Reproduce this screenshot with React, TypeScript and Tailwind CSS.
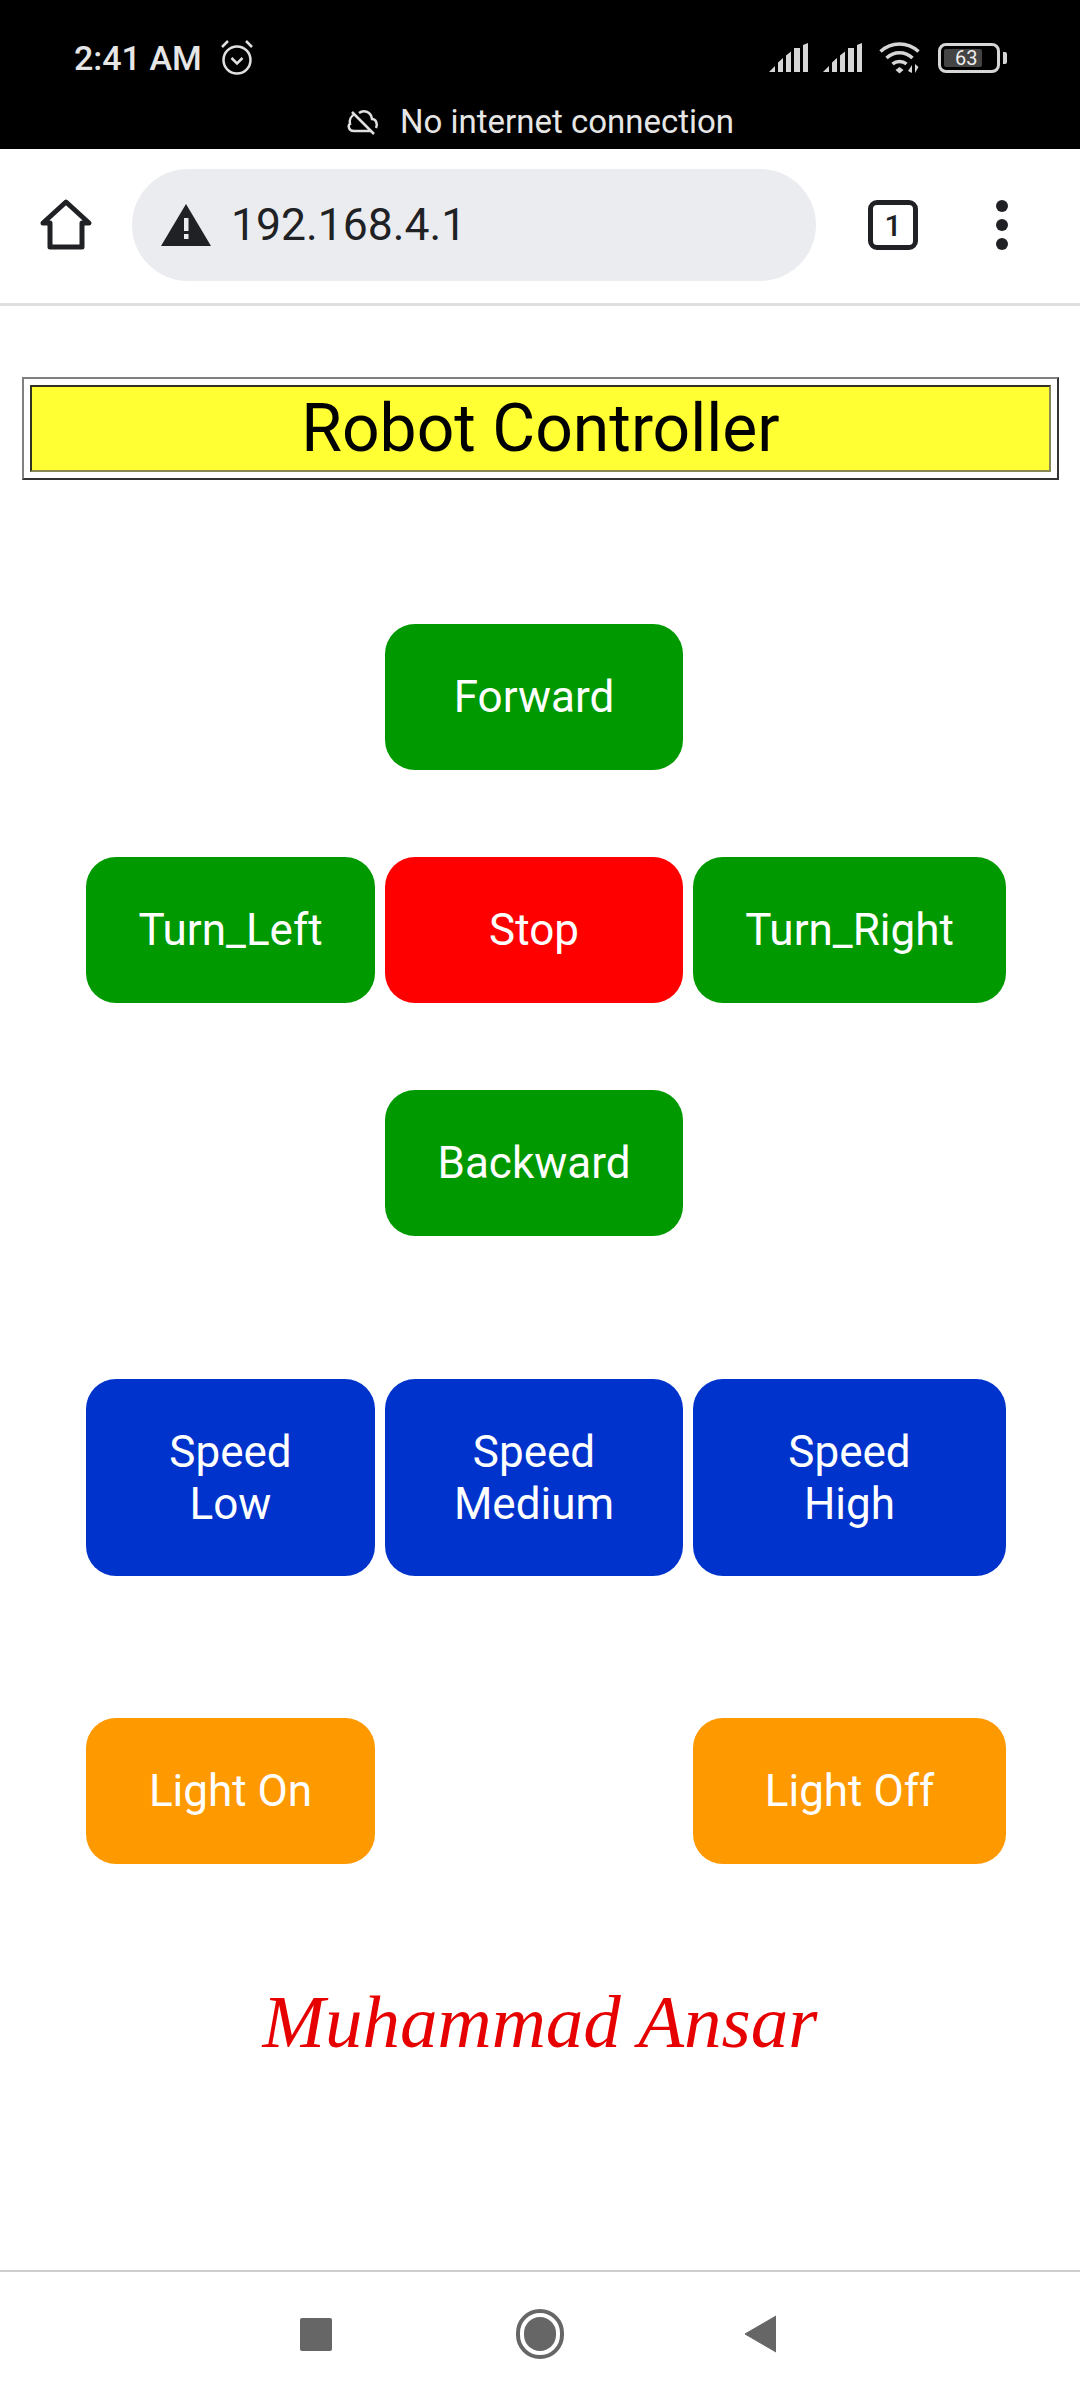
const roboto = "font-[Roboto,'Liberation_Sans',sans-serif]";

function Btn({ label, color }: { label: React.ReactNode; color: string }) {
  return (
    <div className={`flex items-center justify-center rounded-[30px] text-center text-[44px] leading-[52px] text-white ${color}`}>
      {label}
    </div>
  );
}

function Bars() {
  return (
    <svg width="42" height="30" viewBox="0 0 42 30" fill="#d6d6d6">
      <path d="M1 29l6-6v6z" />
      <path d="M10 19.500l5-4.500v14h-5z" />
      <path d="M18 12.500l5-4v20.500h-5z" />
      <rect x="26" y="5" width="6" height="24" />
      <path d="M35 2l5-2v29h-5z" />
    </svg>
  );
}

export default function App() {
  return (
    <div className={`flex h-[2400px] w-[1080px] flex-col bg-white ${roboto}`}>
      {/* Status bar */}
      <div className="flex h-[149px] flex-col bg-black text-[#e6e6e6]">
        <div className="flex h-[94px] items-center justify-between pl-[74px] pr-[73px] pt-[22px]">
          <div className="flex items-center gap-[17px]">
            <span className="text-[34px] font-medium">2:41 AM</span>
            <svg width="36" height="38" viewBox="0 0 36 38" fill="none" stroke="#e0e0e0" strokeWidth="2.500">
              <circle cx="18" cy="21" r="13.500" />
              <path d="M12.500 19l5.500 5.500 5.500-5.500" />
              <path d="M3 8l6-6M33 8l-6-6" />
            </svg>
          </div>
          <div className="flex items-center">
            <Bars />
            <div className="ml-[12px]">
              <Bars />
            </div>
            <svg className="ml-[15px]" width="44" height="32" viewBox="0 0 44 32" fill="none" stroke="#d6d6d6" strokeWidth="3.500">
              <path d="M1.500 9.500c11-10 27-10 38 0" />
              <path d="M7.500 16c7.500-7 18.500-7 26 0" />
              <path d="M13.500 22c4-3.500 10-3.500 14 0" />
              <path d="M20.500 25l4 3-4 3.500-4-3.500z" fill="#d6d6d6" stroke="none" />
              <path d="M33 31v-8l-4 6zM36 22v9l3.500-6z" fill="#d6d6d6" stroke="none" />
            </svg>
            <div className="ml-[15px] flex items-center gap-[3px]">
              <div className="flex h-[30px] w-[62px] items-center rounded-[8px] border-[3px] border-[#d6d6d6] p-[3px]">
                <div className="flex h-full w-[38px] items-center rounded-[2px] bg-[#444444]">
                  <span className="pl-[11px] text-[20px] leading-none text-[#eeeeee]">63</span>
                </div>
              </div>
              <div className="h-[12px] w-[4px] rounded-r-[2px] bg-[#d6d6d6]" />
            </div>
          </div>
        </div>
        <div className="mt-[8px] flex items-center justify-center gap-[20px]">
          <svg width="34" height="30" viewBox="0 0 34 30" fill="none" stroke="#e0e0e0" strokeWidth="2.500">
            <path d="M6 5l22 22" />
            <path d="M9 7c-4 2-6 6-5 10-2 1-2 7 4 7h17M13 6c5-4 12-1 13 6 4 0 6 5 4 9" />
          </svg>
          <span className="text-[33px] leading-[40px]">No internet connection</span>
        </div>
      </div>

      {/* Browser toolbar */}
      <div className="flex h-[157px] items-center border-b-[3px] border-[#dfdfdf] pb-[2px]">
        <div className="flex w-[132px] justify-center">
          <svg width="54" height="54" viewBox="0 0 54 54" fill="none" stroke="#202124" strokeWidth="5" strokeLinejoin="round">
            <path d="M4 25L27 4l23 21h-7v24H11V25z" />
          </svg>
        </div>
        <div className="flex h-[112px] w-[684px] items-center rounded-[56px] bg-[#ebecf0] pl-[29px]">
          <svg width="50" height="44" viewBox="0 0 50 44">
            <path d="M25 1L50 43H0z" fill="#202124" />
            <rect x="23" y="15" width="4.500" height="13" fill="#ebecf0" />
            <rect x="23" y="31" width="4.500" height="5" fill="#ebecf0" />
          </svg>
          <span className="ml-[20px] text-[44.500px] text-[#202124]">192.168.4.1</span>
        </div>
        <div className="ml-[52px] flex h-[50px] w-[50px] items-center justify-center rounded-[9px] border-[5px] border-[#202124] text-[30px] font-medium text-[#202124]">
          1
        </div>
        <div className="ml-[78px] flex flex-col gap-[7px]">
          <div className="h-[12px] w-[12px] rounded-full bg-[#202124]" />
          <div className="h-[12px] w-[12px] rounded-full bg-[#202124]" />
          <div className="h-[12px] w-[12px] rounded-full bg-[#202124]" />
        </div>
      </div>

      {/* Page */}
      <div className="flex flex-1 flex-col">
        <div className="ml-[22px] mt-[71px] h-[103px] w-[1037px] border-2 border-t-[#808080] border-r-[#333333] border-b-[#333333] border-l-[#808080] p-[6px]">
          <div className="flex h-full items-center justify-center border-2 border-t-[#333322] border-r-[#888855] border-b-[#888855] border-l-[#333322] bg-[#ffff33] text-[66px] leading-none text-black">
            Robot Controller
          </div>
        </div>

        <div className="ml-[86px] mt-[144px] grid grid-cols-[289px_298px_313px] grid-rows-[146px_146px_146px] gap-x-[10px] gap-y-[87px]">
          <div />
          <Btn label="Forward" color="bg-[#009900]" />
          <div />
          <Btn label="Turn_Left" color="bg-[#009900]" />
          <Btn label="Stop" color="bg-[#ff0000]" />
          <Btn label="Turn_Right" color="bg-[#009900]" />
          <div />
          <Btn label="Backward" color="bg-[#009900]" />
          <div />
        </div>

        <div className="ml-[86px] mt-[143px] grid h-[197px] grid-cols-[289px_298px_313px] gap-x-[10px]">
          <Btn label={<>Speed<br />Low</>} color="bg-[#0033cc]" />
          <Btn label={<>Speed<br />Medium</>} color="bg-[#0033cc]" />
          <Btn label={<>Speed<br />High</>} color="bg-[#0033cc]" />
        </div>

        <div className="ml-[86px] mt-[142px] grid h-[146px] grid-cols-[289px_298px_313px] gap-x-[10px]">
          <Btn label="Light On" color="bg-[#ff9900]" />
          <div />
          <Btn label="Light Off" color="bg-[#ff9900]" />
        </div>

        <div className="mt-[108px] text-center font-['Liberation_Serif',cursive] text-[75px] italic leading-[100px] text-[#e60000]">
          Muhammad Ansar
        </div>
      </div>

      {/* Navigation bar */}
      <div className="flex h-[130px] items-center justify-between border-t-[2px] border-[#cfcfcf] pb-[4px] pl-[300px] pr-[304px]">
        <div className="h-[33px] w-[32px] rounded-[2px] bg-[#666666]" />
        <div className="ml-[3px] flex h-[50px] w-[48px] items-center justify-center rounded-full border-[4px] border-[#666666]">
          <div className="h-[34px] w-[32px] rounded-full bg-[#666666]" />
        </div>
        <svg width="32" height="38" viewBox="0 0 32 38">
          <path d="M32 1v36L1 19z" fill="#666666" stroke="#666666" strokeWidth="1" strokeLinejoin="round" />
        </svg>
      </div>
    </div>
  );
}
